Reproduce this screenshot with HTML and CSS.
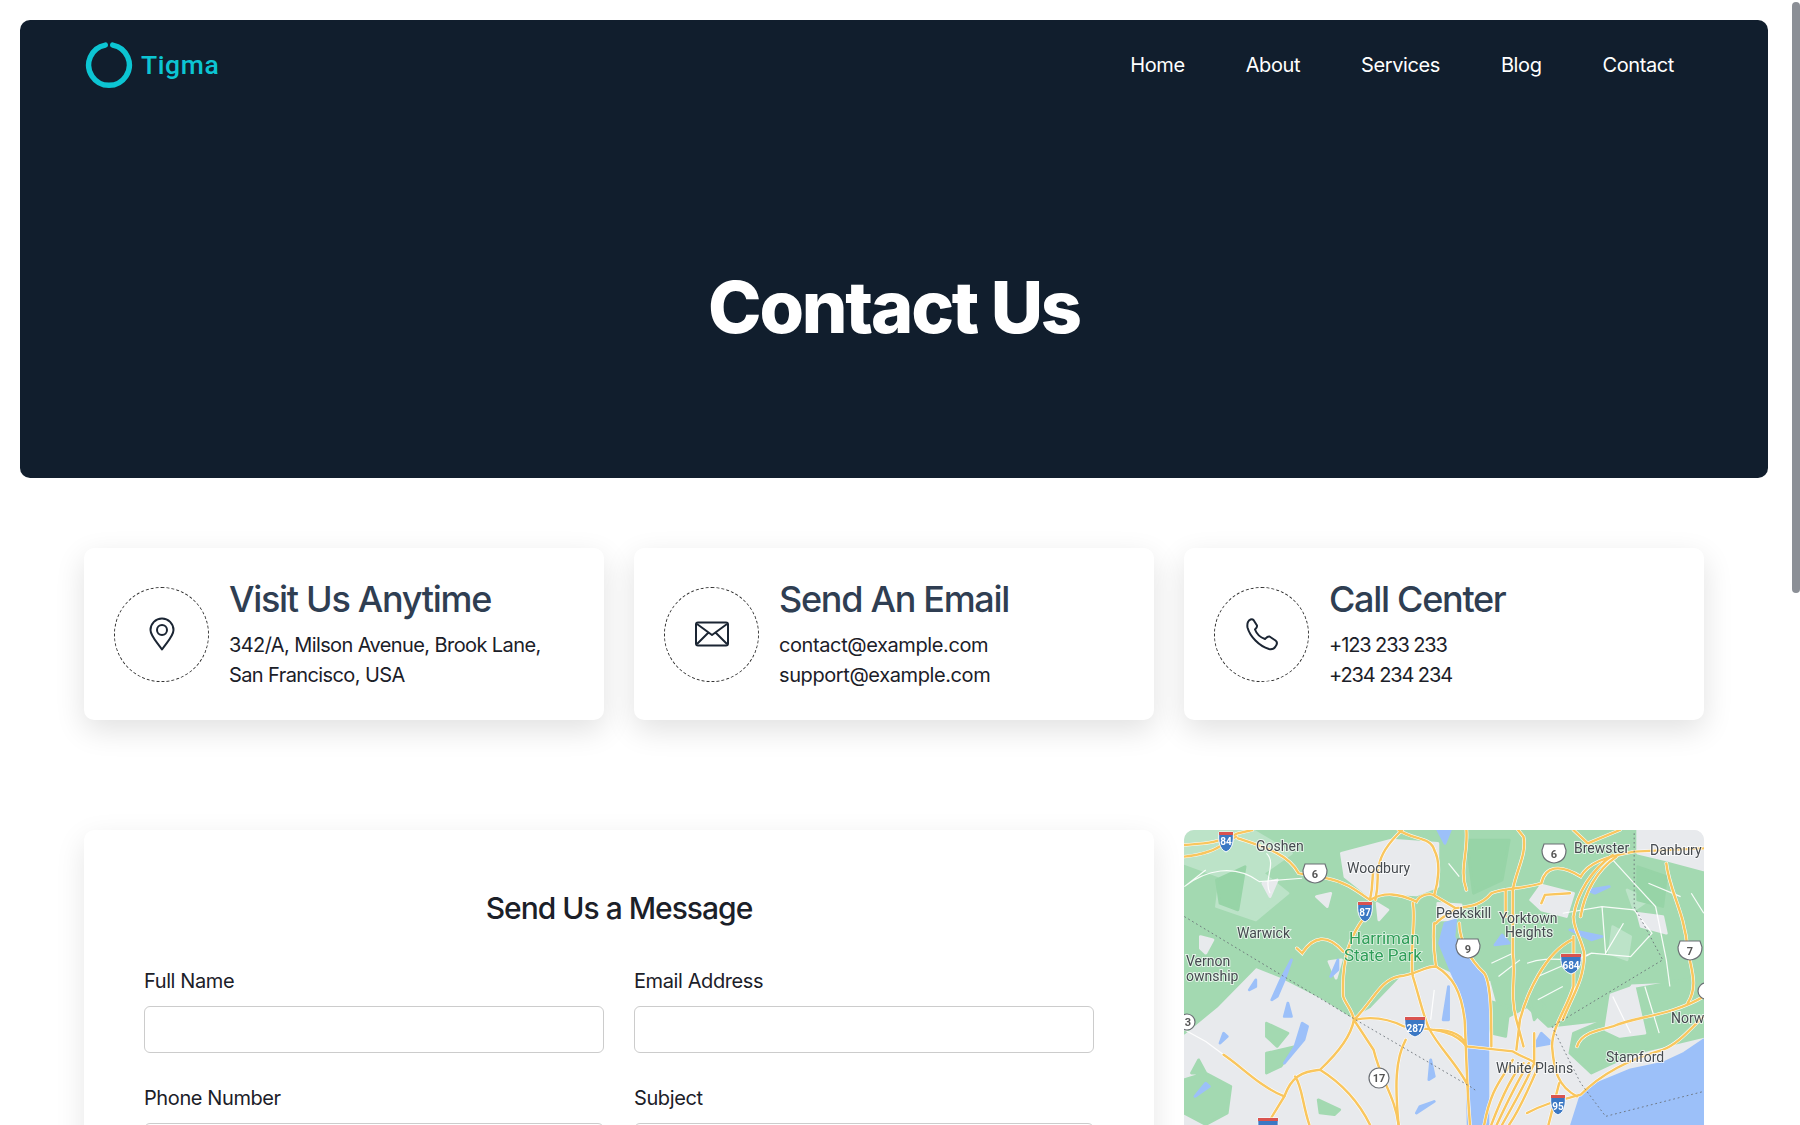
FILE: index.html
```html
<!DOCTYPE html>
<html lang="en">
<head>
<title>Contact Us - Tigma</title>
<meta charset="UTF-8">
<link rel="stylesheet" href="styles.css">
</head>
<body>

<div class="scroll-thumb"></div>

<section class="hero">
	<header class="topbar">
		<a class="logo" href="#">
			<svg width="50" height="50" viewBox="0 0 50 50"><path d="M21.300 5.040 A20.300 20.300 0 1 0 28.700 5.040" fill="none" stroke="#0cc5d3" stroke-width="5.400" stroke-linecap="round"/></svg>
			<span class="logo-text">Tigma</span>
		</a>
		<nav class="menu">
			<a href="#">Home</a>
			<a href="#">About</a>
			<a href="#">Services</a>
			<a href="#">Blog</a>
			<a href="#">Contact</a>
		</nav>
	</header>
	<h1 class="hero-title">Contact Us</h1>
</section>

<section class="info-row">
	<div class="info-card">
		<div class="info-icon">
			<svg width="30" height="34" viewBox="0 0 30 34" fill="none" stroke="#1b2533" stroke-width="2"><path d="M15 32.500 C10 25 3.500 19 3.500 13 A11.500 11.500 0 0 1 26.500 13 C26.500 19 20 25 15 32.500 Z" stroke-linejoin="round"/><circle cx="15" cy="13" r="5"/></svg>
		</div>
		<div>
			<h3>Visit Us Anytime</h3>
			<p>342/A, Milson Avenue, Brook Lane,<br>San Francisco, USA</p>
		</div>
	</div>
	<div class="info-card">
		<div class="info-icon">
			<svg width="34" height="26" viewBox="0 0 34 26" fill="none" stroke="#1b2533" stroke-width="2" stroke-linejoin="round"><rect x="1" y="1.500" width="32" height="23" rx="2"/><path d="M2 3 L17 14 L32 3 M2 23 L13.500 11.500 M32 23 L20.500 11.500"/></svg>
		</div>
		<div>
			<h3>Send An Email</h3>
			<p class="wide">contact@example.com<br>support@example.com</p>
		</div>
	</div>
	<div class="info-card">
		<div class="info-icon">
			<svg width="34" height="34" viewBox="0 0 34 34" fill="none" stroke="#1b2533" stroke-width="2" stroke-linejoin="round"><path d="M3 5 C4 2.500 7 1.500 8.500 3 L12 8.500 C12.500 10 11 11.500 10 12.500 C11.500 16.500 15.500 20.500 20 22 C21.500 20.500 22.500 19 24.500 19.500 L30.500 23.500 C32.500 25 32 27.500 30.500 29.500 C29 32 26.500 32.500 24 32 C14 29 5 19.500 2.500 10.500 C2.200 8.500 2.300 6.500 3 5 Z"/></svg>
		</div>
		<div>
			<h3>Call Center</h3>
			<p class="narrow">+123 233 233<br>+234 234 234</p>
		</div>
	</div>
</section>

<section class="contact-row">
	<form class="message-card">
		<h2>Send Us a Message</h2>
		<div class="form-grid">
			<div class="field">
				<label for="fullname">Full Name</label>
				<input type="text" id="fullname">
			</div>
			<div class="field">
				<label for="email">Email Address</label>
				<input type="text" id="email">
			</div>
			<div class="field">
				<label for="phone">Phone Number</label>
				<input type="text" id="phone">
			</div>
			<div class="field">
				<label for="subject">Subject</label>
				<input type="text" id="subject">
			</div>
		</div>
	</form>

	<div class="map">
		<svg class="map-art" width="520" height="320" viewBox="0 0 520 320">
			<defs>
				<g id="roads">
					<path d="M40 75 C100 70 130 70 190 40 L230 30 M40 110 Q120 100 150 70 L185 50"/>
					<path d="M190 55 C260 80 330 100 360 160 L440 175 C490 185 520 210 560 240 C600 215 640 220 690 245 C700 225 730 215 745 230 L800 265 C830 260 870 260 900 220 C930 205 1000 205 1040 190 C1050 140 1090 130 1150 170 C1170 130 1220 110 1300 95 L1495 85"/>
					<path d="M560 240 C570 190 565 170 570 150 M575 240 C585 190 580 170 582 150 M585 140 C590 90 640 40 650 30 M640 30 C680 60 730 50 740 90 C760 130 750 190 740 225"/>
					<path d="M830 30 C835 100 810 150 830 210 M960 210 C970 150 1000 100 990 50 L975 30 M1040 250 L1050 225 L1120 220 M1130 30 L1170 70 L1260 30"/>
					<path d="M547 290 C500 350 480 430 485 530 C490 550 510 570 515 600 C560 590 610 595 655 620 C700 630 790 620 830 680 L960 695 C1000 720 1020 720 1030 740"/>
					<path d="M355 385 L370 400 C400 350 440 340 485 395 M515 600 C505 660 450 720 420 750 C370 755 340 770 320 830 L280 900 M420 750 C480 790 530 850 560 915 M515 600 L570 690 C590 780 630 830 640 915 M350 770 C370 800 370 850 390 915"/>
					<path d="M520 595 C570 540 590 480 640 470 C690 465 710 440 745 440 C790 470 815 510 825 600 C830 700 830 780 840 915 M740 630 C780 630 820 640 830 680"/>
					<path d="M680 250 C690 300 670 400 680 470 C700 540 710 590 725 625 C750 680 810 740 835 800 M660 660 C630 720 630 800 640 915 M150 705 C200 740 250 800 320 830"/>
					<path d="M1130 290 C1130 330 1150 350 1160 400 M1130 290 C1140 220 1180 150 1240 105 M1150 290 C1160 220 1195 150 1250 110 M1130 350 L1130 500 C1110 570 1070 620 1070 680 C1075 750 1085 800 1140 830 M1160 400 C1160 480 1130 520 1100 600"/>
					<path d="M1125 360 C1050 400 1000 520 980 600 L970 690 M960 210 L960 400 C970 470 950 520 970 600 L990 680 M940 210 L940 290 M1020 640 L1020 730"/>
					<path d="M880 915 C900 800 930 780 960 720 M900 915 C930 830 960 760 990 730 M930 915 C970 840 1000 780 1020 730 M950 915 C985 860 1010 790 1030 745 M915 915 C950 835 980 770 1005 730"/>
					<path d="M1000 880 C1050 850 1100 840 1150 825 C1200 770 1280 720 1380 690 C1430 670 1470 610 1495 590 M1140 680 C1150 640 1200 630 1240 620 C1300 590 1400 590 1495 530 M1060 915 L1090 790"/>
					<path d="M810 310 C810 360 840 420 880 460 C900 490 900 600 900 680 M740 310 C735 370 740 400 745 440 M745 310 C760 290 790 280 800 265 M1390 130 C1400 220 1440 270 1450 390 C1460 450 1480 500 1450 550"/>
				</g>
			</defs>
			<g class="map-ground" transform="scale(0.357 0.333) translate(-39 -30)">
				<rect x="39" y="30" width="1456" height="1000" fill="#e8eaed"/>
				<g class="blobs">
					<path fill="#a3d9b1" stroke="#a3d9b1" d="M39 30 H1495 V480 L1290 490 L1220 600 L1060 620 L1000 560 L930 600 L900 480 L820 470 L740 430 L640 470 L560 560 L510 590 L420 530 L310 470 L240 440 L130 560 L39 640 Z"/>
					<path fill="#a3d9b1" stroke="#a3d9b1" d="M1495 470 V650 L1300 700 L1180 760 L1120 700 L1130 640 L1220 600 L1240 520 Z"/>
					<path fill="#e8eaed" stroke="#e8eaed" d="M1235 525 L1300 500 L1330 640 L1260 650 L1220 630 Z"/>
					<path fill="#a3d9b1" stroke="#a3d9b1" d="M39 780 L100 760 L170 800 L160 880 L100 915 L39 880 Z M270 610 L330 640 L300 680 L270 650 Z M270 700 L350 680 L310 740 L270 760 Z M415 840 L475 870 L460 885 L420 880 Z M880 540 L950 560 L940 650 L900 640 Z M1000 500 L1050 560 L1020 600 Z M60 760 L80 720 L100 760 Z"/>
					<path fill="#bce3c8" stroke="#bce3c8" d="M39 30 H230 L340 100 L260 160 L330 220 L240 300 L130 260 L140 170 L39 130 Z"/>
					<path fill="#bce3c8" stroke="#bce3c8" d="M1240 320 L1290 350 L1280 420 L1230 400 Z M1280 210 L1340 240 L1300 270 Z"/>
					<path fill="#97d4a7" stroke="#97d4a7" d="M130 180 L210 140 L190 270 L140 250 Z M830 60 L950 60 L930 180 L850 220 Z M1310 140 L1390 170 L1380 260 L1310 240 Z"/>
					<path fill="#e8eaed" stroke="#e8eaed" d="M480 100 L620 60 L750 70 L750 200 L690 225 L600 220 L560 230 L490 170 Z M750 250 L815 255 L800 300 L750 300 Z M1010 240 L1040 195 L1130 220 L1110 290 L1040 270 Z M1310 280 L1380 290 L1390 340 L1320 320 Z M85 350 L120 360 L100 400 L85 385 Z M1310 30 H1495 V150 L1390 120 L1310 100 Z M1070 640 L1100 690 L1060 710 Z M410 230 L450 220 L440 260 Z M580 250 L610 270 L585 300 Z M445 425 L480 420 L465 475 Z M260 190 L300 180 L280 230 Z"/>
					<path fill="#9cc0f9" stroke="#9cc0f9" d="M770 310 L800 300 L795 350 L812 392 L860 440 L890 490 L890 915 L835 915 L830 600 L815 520 L790 460 L755 370 Z M750 30 L785 30 L770 70 Z"/>
					<path fill="#9cc0f9" stroke="#9cc0f9" d="M1495 660 L1440 700 L1380 730 L1290 750 L1200 790 L1150 830 L1125 915 H1495 Z"/>
					<path fill="#9cc0f9" stroke="#9cc0f9" d="M340 420 L310 480 L285 540 L300 530 L320 480 Z M470 420 L450 470 L470 450 Z M240 480 L222 510 L240 500 Z M370 610 L350 680 L320 730 L375 660 L385 620 Z M330 550 L320 590 L340 590 Z M780 500 L765 600 L780 600 Z M730 720 L725 780 L740 770 Z M690 880 L740 845 L700 860 Z M1120 330 L1210 350 L1180 360 Z M1170 210 L1230 200 L1190 220 Z M930 345 L910 375 L950 370 Z M1040 640 L1020 680 L1070 670 Z M150 640 L140 670 L160 650 Z M100 790 L70 830 L110 800 Z"/>
				</g>
				<g fill="none" stroke="#ffffff" stroke-width="3.500" opacity=".9">
					<path d="M40 200 C100 150 180 130 250 185 L370 175 M270 100 C300 130 260 180 280 220 M1030 470 L1180 400 L1290 410 L1350 340 L1300 270 L1210 260 L1100 280 M1210 260 L1220 400 L1270 310 M1000 430 C1080 400 1120 440 1180 400 M1240 120 L1300 190 L1360 260 L1390 420 L1400 500 M740 510 L730 600 M40 630 L100 665 L150 705 M1340 190 L1430 230 M920 470 L980 420 M1030 540 L1100 500 M1240 530 L1290 640 M1330 500 L1370 640 M100 150 L40 200 M780 130 L810 170 M900 430 L960 400 M1460 220 L1495 280"/>
				</g>
				<g fill="none" stroke="#ffffff" stroke-width="10" stroke-linecap="round"><use href="#roads"/></g>
				<g fill="none" stroke="#f9c65e" stroke-width="7" stroke-linecap="round"><use href="#roads"/></g>
				<path fill="none" stroke="#666d75" stroke-width="2.500" stroke-dasharray="5 8" d="M40 290 L520 600 L840 800 L860 815 M1300 40 L1300 260 L1380 420 L1070 620 L1150 790 L1220 890 L1495 815"/>
			</g>
			<g class="shield-i">
				<path d="M35 2 H49 C50 10 49 19 42 22 C35 19 34 10 35 2 Z"/>
				<path d="M174 72 H188 C189 80 188 89 181 92 C174 89 173 80 174 72 Z"/>
				<path d="M221 187 H241 C242 196 240 204 231 207 C222 204 220 196 221 187 Z"/>
				<path d="M377 124 H397 C398 133 396 141 387 144 C378 141 376 133 377 124 Z"/>
				<path d="M367 265 H381 C382 273 381 282 374 285 C367 282 366 273 367 265 Z"/>
				<path d="M74 288 H94 C95 297 93 305 84 308 C75 305 73 297 74 288 Z"/>
			</g>
			<g class="shield-red">
				<rect x="35" y="2" width="14" height="3"/>
				<rect x="174" y="72" width="14" height="3"/>
				<rect x="221" y="187" width="20" height="3"/>
				<rect x="377" y="124" width="20" height="3"/>
				<rect x="367" y="265" width="14" height="3"/>
				<rect x="74" y="288" width="20" height="3"/>
			</g>
			<g class="shield-u">
				<path d="M121 34 H141 L143 40 C143 47 139 52 131 53 C123 52 119 47 119 40 Z"/>
				<path d="M360 14 H380 L382 20 C382 27 378 32 370 33 C362 32 358 27 358 20 Z"/>
				<path d="M274 109 H294 L296 115 C296 122 292 127 284 128 C276 127 272 122 272 115 Z"/>
				<path d="M496 111 H516 L518 117 C518 124 514 129 506 130 C498 129 494 124 494 117 Z"/>
				<circle cx="195" cy="248" r="10"/>
				<circle cx="3" cy="192" r="8"/>
				<circle cx="522" cy="161" r="8"/>
			</g>
			<g class="num-w">
				<text x="42" y="15">84</text>
				<text x="181" y="86">87</text>
				<text x="231" y="202">287</text>
				<text x="387" y="139">684</text>
				<text x="374" y="280">95</text>
			</g>
			<g class="num-d">
				<text x="131" y="48">6</text>
				<text x="370" y="28">6</text>
				<text x="284" y="123">9</text>
				<text x="506" y="125">7</text>
				<text x="195" y="252">17</text>
				<text x="4" y="196">3</text>
			</g>
			<g class="place">
				<text x="72" y="21">Goshen</text>
				<text x="163" y="43">Woodbury</text>
				<text x="390" y="23">Brewster</text>
				<text x="466" y="25">Danbury</text>
				<text x="252" y="88">Peekskill</text>
				<text x="315" y="93">Yorktown</text>
				<text x="321" y="107">Heights</text>
				<text x="53" y="108">Warwick</text>
				<text x="2" y="136">Vernon</text>
				<text x="2" y="151">ownship</text>
				<text x="487" y="193">Norw</text>
				<text x="422" y="232">Stamford</text>
				<text x="312" y="243">White Plains</text>
			</g>
			<g class="park">
				<text x="165" y="114">Harriman</text>
				<text x="160" y="131">State Park</text>
			</g>
		</svg>
	</div>
</section>

</body>
</html>
```

FILE: styles.css
```css
* {
	box-sizing: border-box;
}

html {
	background-color: #fff;
}

body {
	margin: 0;
	padding: 20px 32px 700px 20px;
	font: 20px/30px "Inter", "Liberation Sans", sans-serif;
	letter-spacing: -0.6px;
	color: #1b2028;
	background-color: #fff;
}

/* headless browser hides the real scrollbar, so the thumb sits over the page */
.scroll-thumb {
	position: fixed;
	top: 2px;
	right: 0;
	width: 8px;
	height: 591px;
	background-color: #8b8f96;
	border-radius: 4px;
}

a {
	color: inherit;
	text-decoration: none;
}

/* top banner */
.hero {
	height: 458px;
	background-color: #111e2d;
	border-radius: 10px;
	color: #fff;
}

.topbar {
	display: flex;
	justify-content: space-between;
	align-items: center;
	padding: 20px 94px 0 64px;
}

.logo {
	display: flex;
	align-items: center;
	gap: 7px;
}

.logo-text {
	font: 500 26.500px/50px "Roboto", sans-serif;
	letter-spacing: 0.6px;
	color: #0cc5d3;
}

.menu {
	display: flex;
	gap: 61px;
	letter-spacing: -0.4px;
}

.hero-title {
	margin: 174px 0 0;
	font-size: 72px;
	line-height: 86px;
	font-weight: 800;
	letter-spacing: -2.200px;
	text-align: center;
}

/* the three cards */
.info-row {
	display: grid;
	grid-template-columns: repeat(3, 1fr);
	gap: 30px;
	width: 1620px;
	margin: 70px auto 0;
}

.info-card {
	display: flex;
	align-items: center;
	gap: 20px;
	padding: 30px;
	background-color: #fff;
	border-radius: 10px;
	box-shadow: 0 10px 30px rgba(0, 0, 0, .12);
}

.info-icon {
	display: flex;
	justify-content: center;
	align-items: center;
	flex: none;
	width: 95px;
	height: 95px;
	border: 1px dashed #333;
	border-radius: 50%;
}

.info-card h3 {
	margin: 0 0 10px;
	font-size: 36px;
	line-height: 42px;
	font-weight: 500;
	letter-spacing: -1.300px;
	color: #2f3e52;
}

.info-card p {
	margin: 0;
}

.info-card .wide {
	letter-spacing: -0.4px;
}

.info-card .narrow {
	letter-spacing: -1.100px;
}

/* form and map */
.contact-row {
	display: grid;
	grid-template-columns: 1070px 520px;
	gap: 30px;
	width: 1620px;
	margin: 110px auto 0;
}

.message-card {
	padding: 60px;
	background-color: #fff;
	border-radius: 10px;
	box-shadow: 0 10px 30px rgba(0, 0, 0, .1);
}

.message-card h2 {
	margin: 0 0 40px;
	font-size: 30px;
	line-height: 36px;
	font-weight: 500;
	letter-spacing: -1px;
	text-align: center;
}

.form-grid {
	display: grid;
	grid-template-columns: repeat(2, 1fr);
	gap: 30px;
}

.field label {
	display: block;
	margin-bottom: 10px;
	letter-spacing: -0.4px;
}

.field input {
	display: block;
	width: 100%;
	height: 47px;
	border: 1px solid #ccc;
	border-radius: 6px;
	background-color: #fff;
}

.map {
	overflow: hidden;
	background-color: #e8eaed;
	border-radius: 10px;
}

.map-art {
	display: block;
	filter: blur(.3px);
}

.map-ground {
	filter: blur(.8px);
}

.blobs path {
	stroke-width: 8px;
	stroke-linejoin: round;
}

.map-art text {
	font-family: "Roboto", sans-serif;
	letter-spacing: 0;
}

.place text {
	font-size: 14px;
	fill: #454a4f;
	stroke: #fff;
	stroke-width: 2px;
	stroke-opacity: .7;
	paint-order: stroke;
}

.park text {
	font-size: 17px;
	fill: #2f9e58;
	stroke: #fff;
	stroke-width: 1.5px;
	stroke-opacity: .7;
	paint-order: stroke;
}

.shield-i path {
	fill: #3b78c4;
	stroke: #fff;
}

.shield-red rect {
	fill: #d9534f;
}

.shield-u path,
.shield-u circle {
	fill: #fff;
	stroke: #6b6f75;
	stroke-width: 1.2px;
}

.num-w text {
	font-size: 10px;
	font-weight: 700;
	fill: #fff;
	text-anchor: middle;
}

.num-d text {
	font-size: 11px;
	font-weight: 700;
	fill: #555;
	text-anchor: middle;
}
```
